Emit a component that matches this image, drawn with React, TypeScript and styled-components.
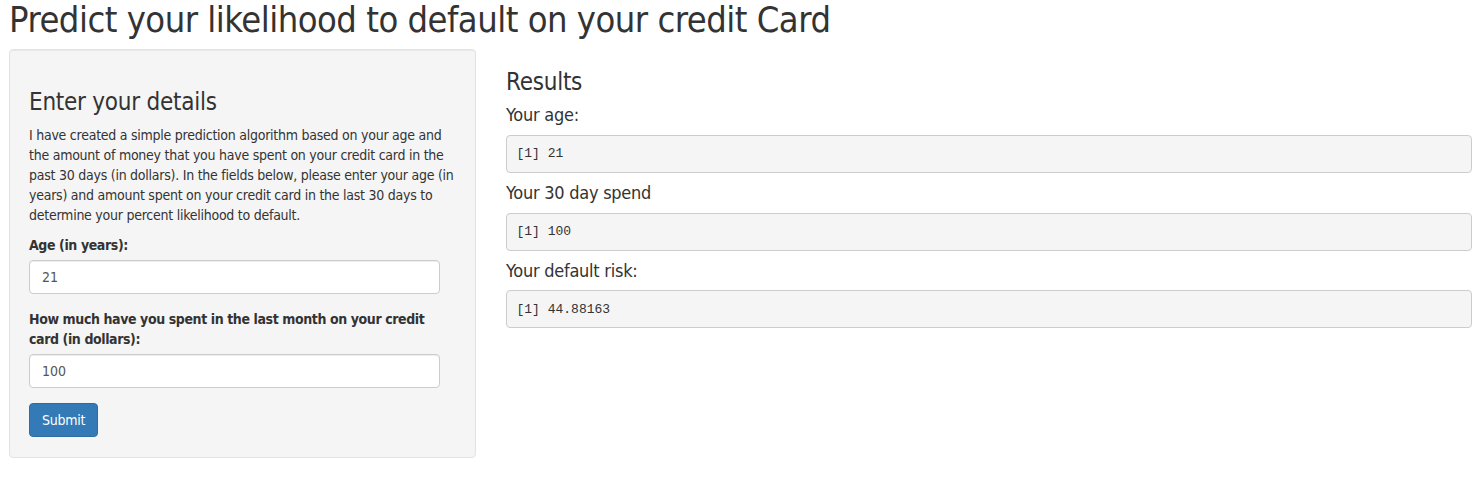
import React from "react";
import styled, { createGlobalStyle } from "styled-components";

const Global = createGlobalStyle`
  html, body { margin: 0; padding: 0; background: #fff; }
  body {
    font-family: "DejaVu Sans Condensed", "DejaVu Sans", sans-serif;
    font-size: 14px;
    line-height: 1.42857143;
    color: #333;
    letter-spacing: -0.25px;
  }
  * { box-sizing: border-box; }
`;

const Page = styled.div`
  padding: 0 7px 0 9px;
`;

const Title = styled.h1`
  margin: 0 0 9px 0;
  font-size: 36px;
  font-weight: 500;
  line-height: 1.1;
  letter-spacing: -0.5px;
  color: #333;
`;

const Row = styled.div`
  display: grid;
  grid-template-columns: 467px 1fr;
  column-gap: 30px;
  align-items: start;
`;

const Well = styled.form`
  background: #f5f5f5;
  border: 1px solid #e3e3e3;
  border-radius: 4px;
  box-shadow: inset 0 1px 1px rgba(0, 0, 0, 0.05);
  padding: 19px 19px 20px 19px;
`;

const SectionTitle = styled.h3`
  margin: 20px 0 10px 0;
  font-size: 24px;
  font-weight: 500;
  line-height: 1.1;
`;

const Intro = styled.p`
  margin: 0 0 10px 0;
`;

const FormGroup = styled.div`
  width: 411px;
  max-width: 100%;
  margin-bottom: 15px;
`;

const Label = styled.label`
  display: block;
  font-weight: 700;
  letter-spacing: -0.4px;
  margin-bottom: 5px;
`;

const Input = styled.input`
  display: block;
  width: 100%;
  height: 34px;
  padding: 6px 12px;
  font-family: inherit;
  font-size: 14px;
  line-height: 1.42857143;
  color: #555;
  background: #fff;
  border: 1px solid #ccc;
  border-radius: 4px;
  box-shadow: inset 0 1px 1px rgba(0, 0, 0, 0.075);
  outline: none;
`;

const Button = styled.button`
  display: inline-block;
  padding: 6px 12px;
  font-family: inherit;
  font-size: 14px;
  letter-spacing: -0.25px;
  line-height: 1.42857143;
  color: #fff;
  background: #337ab7;
  border: 1px solid #2e6da4;
  border-radius: 4px;
  cursor: pointer;
`;

const Main = styled.div``;

const OutputLabel = styled.h4`
  margin: 9px 0 10px 0;
  font-size: 18px;
  font-weight: 500;
  line-height: 1.1;
`;

const Pre = styled.pre`
  margin: 0 0 10px 0;
  padding: 9.5px;
  font-family: "Liberation Mono", "Courier New", monospace;
  font-size: 13px;
  letter-spacing: 0;
  line-height: 17px;
  color: #333;
  background: #f5f5f5;
  border: 1px solid #ccc;
  border-radius: 4px;
  white-space: pre-wrap;
`;

const results = [
  { label: "Your age:", value: "[1] 21" },
  { label: "Your 30 day spend", value: "[1] 100" },
  { label: "Your default risk:", value: "[1] 44.88163" },
];

export default function App() {
  return (
    <>
      <Global />
      <Page>
        <Title>Predict your likelihood to default on your credit Card</Title>
        <Row>
          <Well onSubmit={(e) => e.preventDefault()}>
            <SectionTitle>Enter your details</SectionTitle>
            <Intro>
              I have created a simple prediction algorithm based on your age and
              <br />
              the amount of money that you have spent on your credit card in the
              <br />
              past 30 days (in dollars). In the fields below, please enter your age (in
              <br />
              years) and amount spent on your credit card in the last 30 days to
              <br />
              determine your percent likelihood to default.
            </Intro>
            <FormGroup>
              <Label htmlFor="age">Age (in years):</Label>
              <Input id="age" type="text" defaultValue="21" />
            </FormGroup>
            <FormGroup>
              <Label htmlFor="spend">
                How much have you spent in the last month on your credit card (in
                dollars):
              </Label>
              <Input id="spend" type="text" defaultValue="100" />
            </FormGroup>
            <Button type="submit">Submit</Button>
          </Well>
          <Main>
            <SectionTitle>Results</SectionTitle>
            {results.map((r) => (
              <React.Fragment key={r.label}>
                <OutputLabel>{r.label}</OutputLabel>
                <Pre>{r.value}</Pre>
              </React.Fragment>
            ))}
          </Main>
        </Row>
      </Page>
    </>
  );
}
